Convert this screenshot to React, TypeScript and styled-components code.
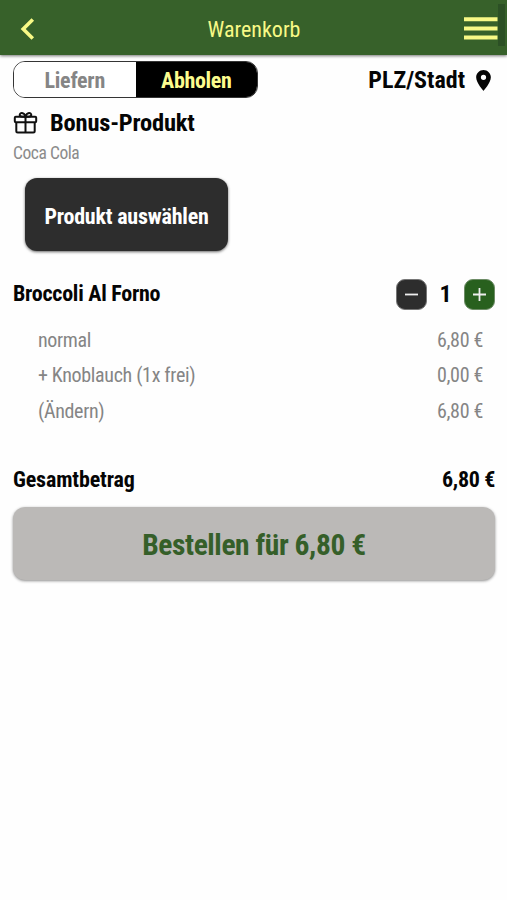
import React from "react";
import styled, { createGlobalStyle } from "styled-components";

const Global = createGlobalStyle`
  * { box-sizing: border-box; }
  body { margin: 0; background: #fff; }
  button { font: inherit; border: 0; padding: 0; cursor: pointer; }
`;

const Page = styled.div`
  height: 900px;
  overflow: hidden;
  background: #fefefe;
  color: #050505;
  font-family: "Roboto Condensed", Roboto, sans-serif;
  font-stretch: 75%;
  font-size: 22px;
`;

const Label = styled.span<{ $size: number; $bold?: boolean; $color?: string; $spacing?: number }>`
  font-size: ${(p) => p.$size}px;
  font-weight: ${(p) => (p.$bold ? 700 : 400)};
  color: ${(p) => p.$color ?? "inherit"};
  letter-spacing: ${(p) => p.$spacing ?? 0}px;
  line-height: 1.2;
  white-space: nowrap;
`;

const Header = styled.header`
  display: grid;
  grid-template-columns: 60px 1fr 60px;
  align-items: center;
  justify-items: center;
  position: relative;
  height: 55px;
  padding: 2px 0 0 1px;
  background: #37612a;
  box-shadow: 0 1px 3px rgba(0, 0, 0, 0.55);
`;

const Title = styled.div`
  padding-top: 3px;
`;

const IconButton = styled.button<{ $side: "start" | "end" }>`
  display: flex;
  justify-self: ${(p) => p.$side};
  padding: ${(p) => (p.$side === "start" ? "0 0 0 19px" : "0 9px 0 0")};
  background: none;
`;

const ScrollThumb = styled.div`
  position: absolute;
  top: 4px;
  right: 2px;
  width: 7px;
  height: 42px;
  background: #2c5025;
`;

const Content = styled.main`
  display: flex;
  flex-direction: column;
  padding: 6px 12px 0 13px;
`;

const Row = styled.div<{ $height: number; $inset?: boolean }>`
  display: flex;
  align-items: center;
  justify-content: space-between;
  height: ${(p) => p.$height}px;
  padding: ${(p) => (p.$inset ? "0 12px 0 25px" : "0")};
`;

const Toggle = styled.div`
  display: grid;
  grid-template-columns: 1fr 1fr;
  width: 245px;
  height: 37px;
  overflow: hidden;
  border: 1px solid #353535;
  border-radius: 12px;
`;

const ToggleOption = styled.button<{ $active?: boolean }>`
  display: flex;
  align-items: center;
  justify-content: center;
  padding-top: 4px;
  background: ${(p) => (p.$active ? "#000" : "#fff")};
  color: ${(p) => (p.$active ? "#fcfc8e" : "#858585")};
`;

const Place = styled.div`
  display: flex;
  align-items: center;
  gap: 11px;
  padding: 2px 4px 0 0;
`;

const Bonus = styled.section`
  display: flex;
  flex-direction: column;
  align-items: flex-start;
  margin-top: 9px;
  height: 170px;
`;

const BonusTitle = styled.div`
  display: flex;
  align-items: center;
  gap: 12px;
  height: 31px;
`;

const BonusName = styled.div`
  display: flex;
  align-items: center;
  height: 31px;
`;

const SelectButton = styled.button`
  width: 203px;
  height: 73px;
  margin: 9px 0 0 12px;
  padding-top: 6px;
  border-radius: 12px;
  background: #2d2d2d;
  color: #fff;
  box-shadow: 0 1px 3px rgba(0, 0, 0, 0.6);
`;

const Counter = styled.div`
  display: grid;
  grid-template-columns: 31px 37px 31px;
  align-items: center;
  justify-items: center;
`;

const StepButton = styled.button<{ $green?: boolean }>`
  display: grid;
  place-items: center;
  width: 31px;
  height: 31px;
  border-radius: 9px;
  border: 1px solid ${(p) => (p.$green ? "#6d8c66" : "#767676")};
  background: ${(p) => (p.$green ? "#28601e" : "#2d2d2d")};
`;

const Options = styled.div`
  padding-top: 11px;
`;

const Total = styled.div`
  margin-top: 35px;
`;

const OrderButton = styled.button`
  height: 73px;
  margin-top: 9px;
  padding-top: 5px;
  border-radius: 12px;
  background: #bbb9b7;
  box-shadow: 0 1px 3px rgba(0, 0, 0, 0.45);
`;

const options = [
  { name: "normal", price: "6,80 €" },
  { name: "+ Knoblauch (1x frei)", price: "0,00 €" },
  { name: "(Ändern)", price: "6,80 €" },
];

const Chevron = () => (
  <svg width="15" height="22" viewBox="0 0 15 22" fill="none" stroke="#f8f986" strokeWidth="3.6">
    <path d="M12.8 1.5 3.2 11l9.6 9.5" />
  </svg>
);

const Menu = () => (
  <svg width="34" height="24" viewBox="0 0 34 24" fill="#f8f986">
    <path d="M0 .2h33.5v4H0zM0 9.4h33.5v4H0zM0 18.5h33.5v4H0z" />
  </svg>
);

const Pin = () => (
  <svg width="15" height="21" viewBox="5 2 14 20">
    <path
      fill="#050505"
      d="M12 2C8.13 2 5 5.13 5 9c0 5.25 7 13 7 13s7-7.75 7-13c0-3.87-3.13-7-7-7m0 9.5a2.5 2.5 0 0 1 0-5 2.5 2.5 0 0 1 0 5"
    />
  </svg>
);

const Gift = () => (
  <svg width="25" height="23" viewBox="0 0 25 23" fill="none" stroke="#101010" strokeWidth="2">
    <rect x="1.8" y="5.8" width="21.4" height="5.4" rx="1" />
    <path d="M3.3 11.2v8.7q0 1.5 1.5 1.5h15.4q1.5 0 1.5-1.5v-8.7M12.5 5.8v15.6" />
    <path d="M12.5 5.7H9.2C5.5 5.7 6.4 1.7 9 2c2 .2 3 2 3.5 3.7C13 4 14 2.2 16 2c2.6-.3 3.5 3.7-.2 3.7z" />
  </svg>
);

const StepIcon = ({ plus }: { plus?: boolean }) => (
  <svg width="15" height="15" viewBox="0 0 15 15" stroke="#eee" strokeWidth="1.8">
    <path d={plus ? "M1 7.5h13M7.5 1v13" : "M1 7.5h13"} />
  </svg>
);

export default function App() {
  return (
    <Page>
      <Global />
      <Header>
        <IconButton $side="start" aria-label="Zurück"><Chevron /></IconButton>
        <Title><Label $size={22} $color="#f8f986">Warenkorb</Label></Title>
        <IconButton $side="end" aria-label="Menü"><Menu /></IconButton>
        <ScrollThumb />
      </Header>
      <Content>
        <Row $height={37}>
          <Toggle>
            <ToggleOption><Label $size={22} $bold $spacing={-0.25}>Liefern</Label></ToggleOption>
            <ToggleOption $active><Label $size={22} $bold $spacing={-0.35}>Abholen</Label></ToggleOption>
          </Toggle>
          <Place>
            <Label $size={24} $bold>PLZ/Stadt</Label>
            <Pin />
          </Place>
        </Row>
        <Bonus>
          <BonusTitle>
            <Gift />
            <Label $size={24.5} $bold $spacing={-0.2}>Bonus-Produkt</Label>
          </BonusTitle>
          <BonusName><Label $size={17.5} $color="#8b8b8b" $spacing={-0.45}>Coca Cola</Label></BonusName>
          <SelectButton><Label $size={22} $bold $spacing={-0.2}>Produkt auswählen</Label></SelectButton>
        </Bonus>
        <Row $height={34}>
          <Label $size={22} $bold $spacing={-0.25}>Broccoli Al Forno</Label>
          <Counter>
            <StepButton aria-label="Weniger"><StepIcon /></StepButton>
            <Label $size={24} $bold>1</Label>
            <StepButton $green aria-label="Mehr"><StepIcon plus /></StepButton>
          </Counter>
        </Row>
        <Options>
          {options.map((o) => (
            <Row key={o.name} $height={35.5} $inset>
              <Label $size={20} $color="#858585" $spacing={-0.33}>{o.name}</Label>
              <Label $size={20} $color="#858585" $spacing={-0.33}>{o.price}</Label>
            </Row>
          ))}
        </Options>
        <Total>
          <Row $height={34}>
            <Label $size={22} $bold $spacing={-0.15}>Gesamtbetrag</Label>
            <Label $size={22} $bold $spacing={-0.33}>6,80 €</Label>
          </Row>
        </Total>
        <OrderButton><Label $size={29.5} $bold $color="#355f29" $spacing={-0.42}>Bestellen für 6,80 €</Label></OrderButton>
      </Content>
    </Page>
  );
}
